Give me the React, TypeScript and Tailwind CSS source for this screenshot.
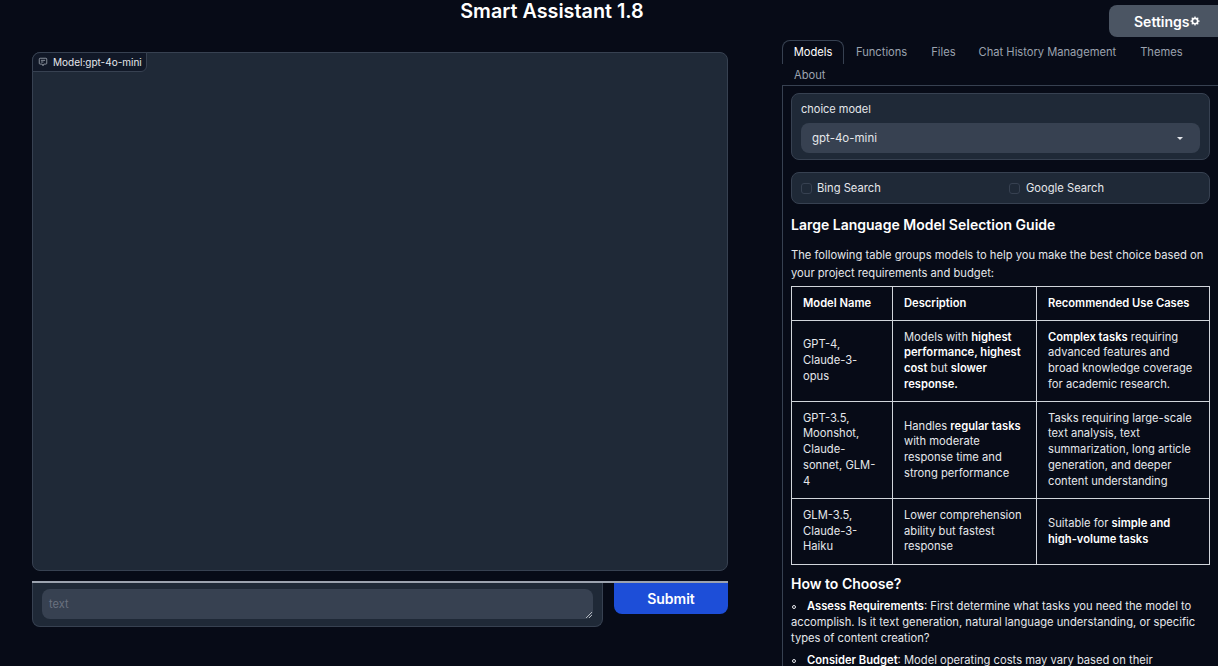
import React from "react";

const Cell = ({ children, bold }: { children: React.ReactNode; bold?: boolean }) => (
  <td className={`border border-[#d1d5db] py-2 pr-3 pl-[11px] align-middle leading-[15.75px] ${bold ? "font-semibold text-white" : ""}`}>{children}</td>
);
const B = ({ children }: { children: React.ReactNode }) => <strong className="font-semibold text-white">{children}</strong>;

export default function App() {
  return (
    <div className="relative h-[666px] w-[1218px] overflow-hidden bg-[#070b17] text-[#e5e7eb]" style={{ fontFamily: "Inter, 'Liberation Sans', sans-serif" }}>
      <h1 className="h-[40px] w-[1104px] text-center text-[19.8px] leading-[22px] font-semibold text-white">Smart Assistant 1.8</h1>
      <button className="absolute top-[5px] right-0 flex h-[32px] w-[109px] items-center justify-start rounded-l-lg bg-[#4b5563] pl-[25px] text-[14px] font-semibold text-white">
        <span>Settings</span>
        <svg width="10" height="10" viewBox="0 0 24 24" fill="none" stroke="white"><circle cx="12" cy="12" r="6.5" strokeWidth="4" /><path d="M12 1v4M12 19v4M1 12h4M19 12h4M4.2 4.2l2.8 2.8M17 17l2.8 2.8M4.2 19.8 7 17M17 7l2.8-2.8" strokeWidth="3" /></svg>
      </button>
      <div className="flex pl-8">
        <div className="w-[696px] pt-3">
          <div className="relative h-[519px] rounded-lg border border-[#374151] bg-[#1f2937]">
            <div className="absolute -top-px -left-px flex h-[20px] items-center gap-[5px] rounded-br-md rounded-tl-lg border border-[#374151] bg-[#111827] pr-[4px] pl-[5px] text-[10px] text-[#e5e7eb]">
              <svg width="10" height="10" viewBox="0 0 24 24" fill="none" stroke="#9ca3af" strokeWidth="2"><path d="M3 5a2 2 0 0 1 2-2h14a2 2 0 0 1 2 2v10a2 2 0 0 1-2 2h-5l-2 4-2-4H5a2 2 0 0 1-2-2z" /><path d="M7 8h10M7 12h6" /></svg>
              <span>Model:gpt-4o-mini</span>
            </div>
          </div>
          <div className="mt-[10px] flex gap-[11px] border-t-2 border-[#9ca3af]">
            <div className="h-[44px] w-[571px] rounded-b-lg border border-t-0 border-[#374151] bg-[#1f2937] px-[9px] pt-[6px]">
              <div className="relative h-[30px] rounded-lg bg-[#374151] px-[7px] pt-[7px] text-[11px] leading-[16px] text-[#6b7280]">
                text
                <svg className="absolute right-[1px] bottom-[1px]" width="6" height="6" viewBox="0 0 6 6" stroke="#d1d5db" strokeWidth="0.8"><path d="M0 6 6 0M3 6l3-3" /></svg>
              </div>
            </div>
            <button className="h-[31px] w-[114px] rounded-b-lg bg-[#1d4ed8] pb-[1px] text-[14px] font-semibold text-white">Submit</button>
          </div>
        </div>
        <div className="ml-[54px] w-[436px] shrink-0">
          <div className="flex h-[45px] flex-wrap content-start text-[11.15px] leading-[24px] text-[#9ca3af]">
            <div className="h-[24px] w-[62px] rounded-t-lg border border-b-0 border-[#374151] text-center leading-[23px] text-white">Models</div>
            <div className="ml-[12px]">Functions</div>
            <div className="ml-[24px]">Files</div>
            <div className="ml-[23px]">Chat History Management</div>
            <div className="ml-[24px]">Themes</div>
            <div className="ml-[12px] h-[21px] w-full leading-[22px]">About</div>
          </div>
          <div className="h-[600px] border-t border-l border-[#374151] px-2 pt-[7px] text-[11.2px] leading-[16px]">
            <div className="h-[67px] w-[419px] rounded-lg border border-[#374151] bg-[#1f2937] px-[9px] pt-[7px]">
              <div className="text-[11px] leading-[16px]">choice model</div>
              <div className="mt-[6px] flex h-[30px] items-center justify-between rounded-lg bg-[#374151] pr-[17px] pl-[11px] text-[11.5px]">
                <span>gpt-4o-mini</span>
                <span className="h-0 w-0 border-x-[3px] border-t-[3px] border-x-transparent border-t-[#e5e7eb]" />
              </div>
            </div>
            <div className="mt-3 flex h-[32px] w-[419px] items-center rounded-lg border border-[#374151] bg-[#1f2937] pl-[9px]">
              <label className="flex w-[208px] items-center gap-[5px]"><span className="h-[11px] w-[11px] rounded-[3px] border border-[#374151] bg-[#1f2937]" />Bing Search</label>
              <label className="flex items-center gap-[6px]"><span className="h-[11px] w-[11px] rounded-[3px] border border-[#374151] bg-[#1f2937]" />Google Search</label>
            </div>
            <h2 className="mt-[11px] text-[14px] leading-[20px] font-semibold text-white">Large Language Model Selection Guide</h2>
            <p className="mt-[11px] w-[419px] leading-[18px]">The following table groups models to help you make the best choice based on your project requirements and budget:</p>
            <table className="mt-[4px] w-[418px] table-fixed border-collapse">
              <colgroup><col className="w-[101px]" /><col className="w-[144px]" /><col className="w-[173px]" /></colgroup>
              <tbody>
                <tr className="h-[34px]"><Cell bold>Model Name</Cell><Cell bold>Description</Cell><Cell bold>Recommended Use Cases</Cell></tr>
                <tr className="h-[81px]">
                  <Cell>GPT-4, Claude-3-opus</Cell>
                  <Cell>Models with <B>highest performance, highest cost</B> but <B>slower response.</B></Cell>
                  <Cell><B>Complex tasks</B> requiring advanced features and broad knowledge coverage for academic research.</Cell>
                </tr>
                <tr className="h-[97px]">
                  <Cell>GPT-3.5, Moonshot, Claude-sonnet, GLM-4</Cell>
                  <Cell>Handles <B>regular tasks</B> with moderate response time and strong performance</Cell>
                  <Cell>Tasks requiring large-scale text analysis, text summarization, long article generation, and deeper content understanding</Cell>
                </tr>
                <tr className="h-[66px]">
                  <Cell>GLM-3.5, Claude-3-Haiku</Cell>
                  <Cell>Lower comprehension ability but fastest response</Cell>
                  <Cell>Suitable for <B>simple and high-volume tasks</B></Cell>
                </tr>
              </tbody>
            </table>
            <h3 className="mt-[9px] text-[14px] leading-[20px] font-semibold text-white">How to Choose?</h3>
            <p className="mt-[4px] w-[419px]"><span className="mr-[11px] ml-[1px] inline-block h-[4px] w-[4px] rounded-full border border-[#e5e7eb] align-middle" /><B>Assess Requirements</B>: First determine what tasks you need the model to accomplish. Is it text generation, natural language understanding, or specific types of content creation?</p>
            <p className="mt-[6px] w-[419px]"><span className="mr-[11px] ml-[1px] inline-block h-[4px] w-[4px] rounded-full border border-[#e5e7eb] align-middle" /><B>Consider Budget</B>: Model operating costs may vary based on their</p>
          </div>
        </div>
      </div>
    </div>
  );
}
